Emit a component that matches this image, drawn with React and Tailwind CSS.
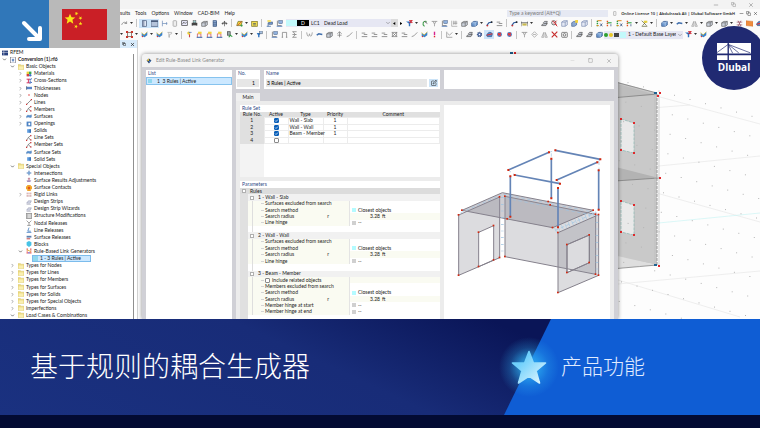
import React from "react";
import { FiChevronDown, FiChevronRight, FiMinus, FiSquare, FiX, FiCopy, FiEdit } from "react-icons/fi";

// small line icons on a 10x10 grid, shared by the toolbars and the tree
const GLYPHS = {
  redo: <path d="M1 7C2 3 6 2 8 5M8 5V2M8 5H5" stroke="#777" fill="none" />,
  panel: <><rect x="2" y="1" width="6" height="8" fill="#dfe8f5" stroke="#47597a" /><path d="M4 1v8" stroke="#47597a" /></>,
  window: <><rect x="0" y="1" width="10" height="8" fill="#b4c3da" stroke="#47597a" /><path d="M0 2h10" stroke="#47597a" strokeWidth="1.6" /></>,
  axis: <path d="M2 1v8M2 5h7M8 3v4" stroke="#6b8bb8" fill="none" />,
  page: <rect x="3" y="1" width="5" height="8" rx="1" fill="#eee" stroke="#999" />,
  board: <><rect x="1" y="1" width="8" height="7" fill="#eef" stroke="#444" /><path d="M2 6l2-3 2 2 2-2" stroke="#444" fill="none" /></>,
  printer: <><rect x="1" y="4" width="8" height="4" fill="#444" /><rect x="3" y="1" width="4" height="3" fill="#9cc" stroke="#444" strokeWidth=".6" /><path d="M3 8h4" stroke="#ddd" /></>,
  cube: <><path d="M1 4l3-2h5v5L6 9H1z" fill="#ccd2dc" stroke="#666" /><path d="M1 4h5v5M6 4l3-2" stroke="#666" fill="none" /></>,
  cubeBlue: <><path d="M1 4l3-2h5v5L6 9H1z" fill="#6f9bd1" stroke="#2c5288" /><path d="M1 4h5v5M6 4l3-2" stroke="#dfeaf8" strokeWidth=".7" fill="none" /></>,
  cubeYellow: <><path d="M1 4l3-2h4v5L5 9H1z" fill="#8ba8d0" stroke="#4a6692" /><rect x="6" y="0" width="4" height="4" fill="#f4d23c" /></>,
  cabinet: <><rect x="3" y="1" width="5" height="8" fill="#8aa7cf" stroke="#35507a" /><path d="M3 4h5M3 7h5" stroke="#35507a" /></>,
  move: <><path d="M5 2v7M1 5h8" stroke="#555" /><path d="M5 1l2 3H3zM1 5l2-2v4zM9 5L7 3v4z" fill="#555" /></>,
  script: <><path d="M3 2h6L7 8H1z" fill="#f5d53b" stroke="#6d6a20" /><path d="M2 8l6-6" stroke="#c33" /><circle cx="8" cy="8" r="1.5" fill="#3a9b46" /></>,
  note: <><rect x="1" y="2" width="8" height="7" fill="#f2dd50" stroke="#7e7320" /><path d="M3 5h4M3 7h4" stroke="#456" /></>,
  loadcase: <><path d="M1 9h6M3 9V4" stroke="#2e5c9c" /><rect x="4" y="3" width="5" height="3" fill="#7ba3d8" stroke="#35507a" /><rect x="2" y="0" width="5" height="3" fill="#f4df6e" /></>,
  supportBlue: <><path d="M2 1v7h6" stroke="#666" fill="none" /><rect x="4" y="1" width="5" height="4" fill="#8fb1de" stroke="#35507a" strokeWidth=".7" /><path d="M1 9h8" stroke="#2e62b0" /></>,
  filterRed: <><path d="M0 2h9L6 5v4H4V5z" fill="#2f74c0" /><path d="M5 0l4 4M9 0L5 4" stroke="#d81f26" strokeWidth="1.7" /></>,
  filter: <><path d="M1 3h6L5 6v3H3V6z" fill="#2f74c0" /><rect x="5" y="0" width="4" height="4" fill="#aac2e2" stroke="#456" strokeWidth=".7" /></>,
  filterGray: <path d="M2 2h6v2L5 5v4H4V2" stroke="#aaa" fill="none" />,
  rotate: <><path d="M8 2C3 1 1 6 5 9" stroke="#3a9b46" strokeWidth="1.5" fill="none" /><path d="M5 2l4 3" stroke="#555" strokeWidth="1.3" /></>,
  load: <path d="M1 2h8M3 2l2 4 2-4M5 6v3" stroke="#888" fill="none" />,
  table: <path d="M1 1v8h8M3 3h6M3 5h6M4 1v6M7 1v6" stroke="#888" strokeWidth=".8" fill="none" />,
  chart: <path d="M1 1v8h8M2 3l3 3 4-4" stroke="#888" fill="none" />,
  member: <><path d="M1 8l3-4 5-1" stroke="#2e5c9c" strokeWidth="1.6" fill="none" /><circle cx="2" cy="8" r="1.3" fill="#c33" /><circle cx="8" cy="3" r="1.3" fill="#222" /></>,
  dims: <><path d="M0 2v7M10 2v7M0 4h10" stroke="#333" /><rect x="2" y="5" width="6" height="3" fill="#c9b94f" /></>,
  zoomRed: <><circle cx="4" cy="4" r="3" stroke="#333" fill="none" /><path d="M6 6l3 3M2 1l6 6M8 1L4 5" stroke="#d81f26" strokeWidth="1.3" /></>,
  wire: <path d="M1 3l3-2h5v6L6 9H1zM1 3h5v6M6 3l3-2" stroke="#7f8fb5" fill="#e3e8f4" />,
  viewX: <><path d="M2 1v8" stroke="#259b3e" strokeWidth="2" strokeDasharray="2 1" /><path d="M2 1h6M1 8h3" stroke="#e08a20" strokeWidth="1.4" /><path d="M6 5l3 4M9 5L6 9" stroke="#247" /></>,
  viewY: <><path d="M2 1v8" stroke="#e5531d" strokeWidth="2" strokeDasharray="2 1" /><path d="M2 4h6" stroke="#259b3e" strokeWidth="1.5" /><path d="M7 6v3" stroke="#247" /></>,
  star: <><path d="M1 1l7 7M8 2L2 8M1 9h8" stroke="#5e6238" /><rect x="4" y="1" width="5" height="3" fill="#e5cf3c" /></>,
  beam: <path d="M1 6l3-2 5 1" stroke="#3f6eac" strokeWidth="2" fill="none" />,
  spider: <path d="M1 3h8M1 7h8M3 1l4 8M7 1L3 9" stroke="#9a5264" />,
  orange: <path d="M0 1l10 1v7L0 8z" fill="#ef8d3e" stroke="#c9682a" strokeWidth=".6" />,
  red: <><rect x="2" y="2" width="6" height="6" fill="none" stroke="#654" /><path d="M0 0h3v3H0zM7 0h3v3H7zM0 7h3v3H0zM7 7h3v3H7z" fill="#c8362c" /></>,
  map: <><path d="M1 3l4 2 4-4v5L5 9 1 7z" fill="#3c83cc" /><path d="M1 2l3 4 5-5" stroke="#e1c23b" fill="none" /><circle cx="2" cy="8" r="1" fill="#d22" /></>,
  app: <><path d="M1 4l4-3 4 3-4 5z" fill="#2d4468" /><path d="M1 4l4-3v4z" fill="#e8c53a" /><path d="M5 5l4-1-3 4z" fill="#4d86d0" /></>,
  nodeYellow: <><path d="M2 9V4h5v5" stroke="#c44" fill="none" /><path d="M3 1h5v3H3z" fill="#f3d43c" /><path d="M1 9h8" stroke="#3a6ab0" strokeWidth="1.5" /></>,
  arrowYellow: <><path d="M5 3v6" stroke="#c44" strokeWidth="1.6" /><circle cx="4" cy="3" r="2.2" fill="#eed03b" /><path d="M4 2h4" stroke="#36c" /></>,
  green: <><rect x="2" y="1" width="4" height="5" fill="#9aa" stroke="#444" /><path d="M4 9l2-3 3 2" stroke="#2a9a3c" strokeWidth="1.5" fill="none" /></>,
  frame: <path d="M2 9V2h6v7M1 9h2M7 9h2" stroke="#777" fill="none" />,
  sigma: <path d="M2 1h6M2 9h6M2 5h6M3 1l3 4-3 4" stroke="#777" fill="none" />,
  wave: <path d="M1 2c1 7 3 7 4 2 1 5 3 5 4-2" stroke="#888" fill="none" />,
  up: <path d="M5 9V1M2 4l3-3 3 3M2 6h6" stroke="#777" fill="none" />,
  slash: <path d="M1 8l3-1 5-5" stroke="#777" fill="none" />,
  steps: <path d="M1 3h5M4 5h5M1 8h8" stroke="#6b6b6b" fill="none" />,
  grid: <path d="M1 2h8M1 8h8M2 2v6M8 2v6M2 8l6-6M3 3l4 4" stroke="#777" fill="none" />,
  magenta: <><path d="M5 1v5" stroke="#d6218d" strokeWidth="2" /><path d="M5 7v2" stroke="#e0282b" strokeWidth="2" /></>,
  gear: <><circle cx="5" cy="5" r="3" fill="#5d78b5" stroke="#35507a" strokeDasharray="1.5 1" strokeWidth="1.6" /><circle cx="5" cy="5" r="1" fill="#fff" /></>,
  eye: <><path d="M1 6c2-5 6-5 8-2L8 8H2z" fill="#5688c8" stroke="#2c5288" /><path d="M1 6l8-2" stroke="#d33" strokeWidth="1.5" /></>,
  ball: <><circle cx="5" cy="5" r="3.5" fill="#4a7fc6" /><path d="M3 6l4-3M3 3l4 4" stroke="#e33" strokeWidth="1.8" /></>,
  polar: <path d="M5 1l4 4-4 4-4-4zM3 5h4" stroke="#999" fill="none" />,
  mirror: <path d="M1 9l3-7v7zM9 9L6 2v7z" stroke="#999" fill="none" />,
  cross: <path d="M1 1l8 8M9 1L1 9" stroke="#c62828" strokeWidth="1.6" />,
  camera: <><rect x="1" y="2" width="8" height="7" rx="1" fill="none" stroke="#555" /><circle cx="5" cy="5.500" r="1.800" fill="none" stroke="#555" /></>,
  stack: <path d="M1 7l3-2h5L7 8H1zM3 4l2-2h4L8 5" stroke="#555" fill="#b9bec8" />,
  folder: <><path d="M0 1h4l1 1h5v7H0z" fill="#eedb80" stroke="#cdb860" strokeWidth=".6" /><path d="M1 4h8v5H1z" fill="#f9efb2" /></>,
  rfem: <><rect x="0" y="1" width="10" height="8" fill="#28407e" /><path d="M3 1v8M0 4h10" stroke="#fff" strokeWidth=".8" /></>,
  file: <><rect x="1" y="0" width="8" height="10" fill="#fff" stroke="#667" /><path d="M3 4h4M3 6h4M5 3v5" stroke="#2e62b0" /></>,
  materials: <><rect x="1" y="1" width="4" height="4" fill="#e9d23a" /><rect x="5" y="1" width="4" height="4" fill="#35a853" /><rect x="1" y="5" width="4" height="4" fill="#d33f3f" /><circle cx="7" cy="7" r="2" fill="#3f74c6" /></>,
  section: <><path d="M1 2h6M1 8h6M4 2v6" stroke="#d0305d" strokeWidth="1.6" /><path d="M6 3l4-2M6 9l4-2M7 4v4" stroke="#3f6ec0" strokeWidth="1.6" /></>,
  thickness: <><rect x="1" y="3" width="9" height="4" fill="#5a86c8" /><path d="M1 2v6" stroke="#234" /></>,
  dot: <circle cx="5" cy="5" r="1.300" fill="#d33" />,
  line: <><path d="M1 9l8-8" stroke="#444" /><path d="M0 8h2v2H0zM8 0h2v2H8z" fill="#c33" /></>,
  lineSet: <><path d="M1 9l3-5 4-3M4 4l4 5" stroke="#555" fill="none" /><path d="M0 8h2v2H0zM7 0h2v2H7zM7 7h2v2H7z" fill="#c33" /></>,
  surface: <path d="M1 5c2-3 5 1 8-2v4c-3 2-5-2-8 1z" fill="#5a93d2" stroke="#3c6ca8" strokeWidth=".6" />,
  opening: <><rect x="1" y="1" width="8" height="8" fill="#4d83c4" /><rect x="4" y="3" width="3" height="4" fill="#fff" /></>,
  solid: <><path d="M2 2h6v6H2z" fill="#5c9ade" /><path d="M6 2h2v6H6z" fill="#2f66ab" /></>,
  inter: <path d="M5 1l1 3 3 1-3 1-1 3-1-3-3-1 3-1z" fill="#6da1dc" stroke="#3f6ea8" strokeWidth=".6" />,
  adjust: <><path d="M1 6h8L7 8H2z" fill="#8c6dab" /><path d="M5 1v5M3 3h4" stroke="#a04060" /></>,
  contact: <><path d="M2 0h6v2h2v5H8v3H2V7H0V2h2z" fill="#f2a52a" /><circle cx="5" cy="5" r="2" fill="#e0541c" /></>,
  rigid: <path d="M2 1v8M5 1v8M8 1v8" stroke="#a55" strokeDasharray="3 1" />,
  strip: <path d="M1 7l3-4h5L7 7zM1 9h7" fill="#d5d9e8" stroke="#7a7f99" strokeWidth=".7" />,
  modify: <><rect x="0" y="1" width="10" height="8" fill="#bbb" stroke="#777" /><path d="M3 3h5M3 5h5M3 7h5" stroke="#fff" /></>,
  release: <path d="M1 1l4 4 4-4M5 5v4M2 9h6" stroke="#666" fill="none" />,
  lineRelease: <path d="M5 1L3 7h5M1 9h8" stroke="#3f7cc0" strokeWidth="1.3" fill="none" />,
  surfRelease: <><path d="M1 3h8v3H1z" fill="#5c7fae" /><path d="M1 8h6" stroke="#b33" strokeWidth="1.5" /></>,
  block: <path d="M5 0l4 2v5L5 10 1 7V2z" fill="#49c3e6" />,
  generator: <><path d="M2 1v8M8 1v8" stroke="#d33" strokeWidth="2" strokeDasharray="2 1" /><path d="M2 3l6 3" stroke="#e0b42c" strokeWidth="1.5" /><circle cx="5" cy="8" r="1.5" fill="#7b57c0" /></>,
  cyan: <rect x="0" y="0" width="10" height="10" fill="#8fd8ee" />,
};

const Glyph = ({ name, className = "size-2" }) => (
  <svg viewBox="0 0 10 10" className={`${className} shrink-0`} aria-hidden="true">
    {GLYPHS[name]}
  </svg>
);

const Toolbar = ({ items, label }) => (
  <div role="toolbar" aria-label={label} className="flex shrink-0 items-center">
    {items.split(" ").map((item, i) => {
      if (item === "|") return <span key={i} className="ml-0.5 mr-0.5 h-2 w-px shrink-0 bg-[#c4c4c4]" />;
      if (item === "_") return <span key={i} className="w-[5px] shrink-0" />;
      if (item === "v")
        return (
          <button key={i} aria-label="More" className="flex h-2 w-[5px] shrink-0 items-center justify-center">
            <svg viewBox="0 0 4 3" className="w-[3px]"><path d="M0 0h4L2 2.500z" fill="#333" /></svg>
          </button>
        );
      const active = item.startsWith("*");
      const name = active ? item.slice(1) : item;
      return (
        <button
          key={i}
          aria-label={name}
          className={`flex h-[9px] w-[10px] shrink-0 items-center justify-center ${active ? "bg-[#cce4f9]" : ""}`}
        >
          <Glyph name={name} className="size-[7px]" />
        </button>
      );
    })}
  </div>
);

// [level, state (o = open, c = closed, - = leaf), icon, label]
const TREE = [
  [0, "-", "rfem", "RFEM"],
  [1, "o", "file", "Conversion (1).rf6"],
  [2, "o", "folder", "Basic Objects"],
  [3, "c", "materials", "Materials"],
  [3, "c", "section", "Cross-Sections"],
  [3, "c", "thickness", "Thicknesses"],
  [3, "c", "dot", "Nodes"],
  [3, "c", "line", "Lines"],
  [3, "c", "lineSet", "Members"],
  [3, "c", "surface", "Surfaces"],
  [3, "c", "opening", "Openings"],
  [3, "-", "solid", "Solids"],
  [3, "-", "lineSet", "Line Sets"],
  [3, "-", "lineSet", "Member Sets"],
  [3, "-", "surface", "Surface Sets"],
  [3, "-", "solid", "Solid Sets"],
  [2, "o", "folder", "Special Objects"],
  [3, "-", "inter", "Intersections"],
  [3, "-", "adjust", "Surface Results Adjustments"],
  [3, "-", "contact", "Surface Contacts"],
  [3, "c", "rigid", "Rigid Links"],
  [3, "-", "strip", "Design Strips"],
  [3, "-", "strip", "Design Strip Wizards"],
  [3, "-", "modify", "Structure Modifications"],
  [3, "-", "release", "Nodal Releases"],
  [3, "-", "lineRelease", "Line Releases"],
  [3, "-", "surfRelease", "Surface Releases"],
  [3, "-", "block", "Blocks"],
  [3, "o", "generator", "Rule-Based Link Generators"],
  [4, "-", "cyan", "1 - 3 Rules | Active"],
  [2, "c", "folder", "Types for Nodes"],
  [2, "c", "folder", "Types for Lines"],
  [2, "c", "folder", "Types for Members"],
  [2, "c", "folder", "Types for Surfaces"],
  [2, "c", "folder", "Types for Solids"],
  [2, "c", "folder", "Types for Special Objects"],
  [2, "c", "folder", "Imperfections"],
  [2, "o", "folder", "Load Cases & Combinations"],
];

const INDENT = ["pl-0.5", "pl-0.5", "pl-[10px]", "pl-[18px]", "pl-[26px]"];

const Navigator = () => (
  <aside className="flex w-[138px] shrink-0 flex-col border-r border-[#d0d0d0] bg-white">
    <div className="flex h-2 shrink-0 items-center justify-end gap-1 bg-[#d8ebfb] pr-0.5">
      <button aria-label="Float panel"><FiCopy className="size-1" strokeWidth={3} /></button>
      <button aria-label="Close panel"><FiX className="size-[5px]" strokeWidth={3} /></button>
    </div>
    <div className="flex min-h-0 flex-1">
      <ul className="grid min-w-0 flex-1 auto-rows-fr whitespace-nowrap pt-px">
        {TREE.map(([level, state, icon, label], i) => (
          <li key={i} className={`flex min-h-0 items-center ${INDENT[level]}`}>
            {level > 0 && (
              <span className="flex w-2 shrink-0 text-[#333]">
                {state === "o" && <FiChevronDown className="size-[5px]" strokeWidth={3} />}
                {state === "c" && <FiChevronRight className="size-[5px]" />}
              </span>
            )}
            <span
              className={
                level === 4
                  ? "-ml-0.5 flex h-[7px] w-[59px] items-center gap-0.5 border border-[#7cbcec] bg-[#cce8ff] leading-none"
                  : `flex items-center gap-0.5 ${level === 1 ? "font-bold" : ""}`
              }
            >
              <Glyph name={icon} className={level === 4 ? "size-[5px]" : "size-1.5"} />
              {label}
            </span>
          </li>
        ))}
      </ul>
      <div className="mt-1.5 w-1 shrink-0"><div className="h-full w-px bg-[#8f8f8f]" /></div>
    </div>
  </aside>
);

const RULES = [
  { no: 1, type: "Wall - Slab", priority: 1, active: true },
  { no: 2, type: "Wall - Wall", priority: 1, active: true },
  { no: 3, type: "Beam - Member", priority: 1, active: true },
  { no: 4, type: "", priority: "", active: false },
];

const Check = ({ checked, label }) => (
  <label className="inline-grid size-[5px] shrink-0 place-items-center">
    <input
      type="checkbox"
      aria-label={label}
      defaultChecked={checked}
      className="col-start-1 row-start-1 size-[5px] appearance-none rounded-[1px] border border-[#8a8a8a] bg-white checked:border-[#0a5fb8] checked:bg-[#0a5fb8]"
    />
    {checked && (
      <svg viewBox="0 0 5 5" className="pointer-events-none col-start-1 row-start-1 size-[5px]">
        <path d="M1 2.500l1 1 2-2" stroke="#fff" strokeWidth=".7" fill="none" />
      </svg>
    )}
  </label>
);

const RuleSet = () => (
  <section className="flex h-[72px] shrink-0 flex-col bg-[linear-gradient(to_right,#f3f3f3_24px,white_24px)]">
    <h2 className="h-[7px] bg-white pl-0.5 leading-[7px] text-[#2f4a86]">Rule Set</h2>
    <table className="h-8 w-full table-fixed border-collapse text-center leading-none">
      <thead className="bg-[#e0e0e0]">
        <tr>
          <th scope="col" className="w-6 p-0 font-normal">Rule No.</th>
          <th scope="col" className="w-6 p-0 font-normal">Active</th>
          <th scope="col" className="w-[35px] p-0 font-normal">Type</th>
          <th scope="col" className="w-6 p-0 font-normal">Priority</th>
          <th scope="col" className="p-0 font-normal">Comment</th>
        </tr>
      </thead>
      <tbody>
        {RULES.map((rule) => (
          <tr key={rule.no}>
            <td className="bg-[#e0e0e0] p-0">{rule.no}</td>
            <td className="border border-[#ececec] p-0 leading-[0]"><Check checked={rule.active} label={`Rule ${rule.no} active`} /></td>
            <td className="whitespace-nowrap border border-[#ececec] p-0 pl-px text-left">{rule.type}</td>
            <td className="border border-[#ececec] p-0">{rule.priority}</td>
            <td className="border border-[#ececec] p-0" />
          </tr>
        ))}
      </tbody>
    </table>
  </section>
);

const searchRows = (first) => [
  { label: first },
  { label: "Search method", color: "bg-[#b4fbff]", value: "Closest objects" },
  { label: "Search radius", symbol: "r", number: "3.28" },
];

const PARAMS = [
  { group: "1 - Wall - Slab" },
  ...searchRows("Surfaces excluded from search"),
  { label: "Line hinge", color: "bg-[#d0d0d0]", value: "--" },
  { blank: true },
  { group: "2 - Wall - Wall" },
  ...searchRows("Surfaces excluded from search"),
  { label: "Line hinge", color: "bg-[#d0d0d0]", value: "--" },
  { blank: true },
  { group: "3 - Beam - Member" },
  { label: "Include related objects", check: true },
  ...searchRows("Members excluded from search"),
  { label: "Member hinge at start", color: "bg-[#d0d0d0]", value: "--" },
  { label: "Member hinge at end", color: "bg-[#d0d0d0]", value: "--" },
];

const Collapse = () => (
  <button aria-label="Collapse" className="flex size-1 shrink-0 items-center justify-center border border-[#b0b0b0] bg-white" />
);

const ParamRow = ({ row }) => {
  if (row.blank) return <div className="ml-2 bg-white pl-1"><div className="h-full w-px bg-[#dedede]" /></div>;
  if (row.group)
    return (
      <div className="ml-2 flex items-center gap-1 bg-[#f1f1f1] pl-0.5">
        <Collapse />
        {row.group}
      </div>
    );
  return (
    <div className="ml-2 flex bg-white">
      <div className="flex w-[102px] shrink-0 items-center border-r border-[#e4e4e4] bg-[#fafbf2] pl-1">
        <span className="h-full w-px bg-[#dedede]" />
        <span className="ml-2 mr-px h-px w-[3px] bg-[#d4d4d4]" />
        {row.check ? (
          <label className="flex items-center gap-0.5">
            <Check label={row.label} />
            {row.label}
          </label>
        ) : (
          row.label
        )}
        {row.symbol && <span className="ml-auto mr-5">{row.symbol}</span>}
      </div>
      <div className={`flex flex-1 items-center gap-0.5 pl-0.5 ${row.number || row.check ? "bg-[#fafbf2]" : ""}`}>
        {row.color && <span className={`size-1 ${row.color}`} />}
        {row.value}
        {row.number && <span className="w-7 text-right">{row.number}</span>}
        {row.number && "ft"}
      </div>
    </div>
  );
};

const Parameters = () => (
  <section className="flex min-h-0 flex-1 flex-col bg-[linear-gradient(to_right,#e0e0e0_8px,white_8px)]">
    <h2 className="h-[7px] shrink-0 bg-white pl-0.5 leading-[7px] text-[#2f4a86]">Parameters</h2>
    <div className="grid min-h-0 flex-1 auto-rows-fr whitespace-nowrap pb-1 leading-none">
      <div className="flex items-center gap-1 bg-[#dcdcdc] pl-0.5">
        <Collapse />
        Rules
      </div>
      {PARAMS.map((row, i) => (
        <ParamRow key={i} row={row} />
      ))}
    </div>
  </section>
);

const BEAMS = [
  [205, 240, 327, 187], [346, 181, 481, 208], [224, 255, 360, 281], [350, 270, 472, 217],
  [334, 206, 334, 325], [476, 241, 476, 359], [211, 259, 211, 380], [354, 294, 354, 412],
];
const MODEL_NODES = [
  [66, 361], [56, 375], [179, 321], [195, 319], [179, 503], [56, 556], [116, 427], [161, 407], [161, 510], [116, 530],
  [195, 500], [467, 373], [467, 553], [476, 374], [476, 556], [354, 428], [354, 608], [381, 464], [448, 435], [448, 518],
  [381, 548], [460, 361], [338, 413], [202, 387], [325, 335], [331, 345],
];

const ModelPreview = () => (
  <svg viewBox="12 45 498 642" preserveAspectRatio="xMidYMin meet" className="h-[214px] w-full" role="img" aria-label="Model preview">
    <g fill="#8c8a96" fillOpacity=".3" stroke="#85818c" strokeWidth="3" fillRule="evenodd">
      <path d="M195 319L467 373V553L195 500z" />
      <path d="M56 375L179 321V503L56 556zM116 427V530L161 510V407z" />
      <path d="M66 361L187 308L460 361L338 413z" fillOpacity=".42" />
      <path d="M354 428L476 374V556L354 608zM381 464V548L448 518V435z" />
      <path d="M381 464L448 435V518L381 548z" fillOpacity="0" />
    </g>
    <g stroke="#9cc3e2" strokeWidth="2" fill="none" strokeDasharray="10 8">
      <path d="M62 368L183 315M191 313L463 367M346 421L470 367" />
      <path d="M200 325L455 375" />
      <path d="M327 187L346 181M334 190V206M481 208L472 217M477 215V241M205 240L224 255M350 270L360 281" />
    </g>
    <path d="M187 322V500M471 376V552" stroke="#9cc3e2" strokeWidth="8" strokeDasharray="2 18" />
    <path d="M346 421L468 368" stroke="#a8cbe6" strokeWidth="14" strokeDasharray="2 9" />
    {BEAMS.map(([x1, y1, x2, y2], i) => (
      <g key={i}>
        <path d={`M${x1} ${y1}L${x2} ${y2}`} stroke="#6484b6" strokeWidth="5" />
        <path d={`M${x1 - 3} ${y1 - 3}h6v6h-6zM${x2 - 3} ${y2 - 3}h6v6h-6z`} fill="#d3280f" />
      </g>
    ))}
    {MODEL_NODES.map(([x, y], i) => (
      <rect key={i} x={x - 3} y={y - 3} width="5" height="5" fill="#d3280f" />
    ))}
  </svg>
);

const GeneratorDialog = () => (
  <div
    role="dialog"
    aria-label="Edit Rule-Based Link Generator"
    className="relative ml-1 mr-[142px] mt-3.5 flex min-w-0 flex-1 flex-col overflow-hidden rounded-t-[3px] bg-[#d0d0d6] shadow-[0_0_4px_rgba(0,0,0,0.45)]"
  >
    <div className="flex h-[13px] shrink-0 items-center gap-1 bg-[#f3f3f3] pl-1 text-[#8a8a8a]">
      <Glyph name="app" className="size-1.5" />
      Edit Rule-Based Link Generator
      <div className="ml-auto mr-1.5 flex items-center gap-[13px]">
        <button aria-label="Minimize"><FiMinus className="size-[5px] text-[#c8c8c8]" /></button>
        <button aria-label="Maximize"><FiSquare className="size-[5px]" /></button>
        <button aria-label="Close"><FiX className="size-[6px]" /></button>
      </div>
    </div>

    <div className="flex min-h-0 flex-1 gap-1 px-1 pt-[3px]">
      <section className="w-[86px] shrink-0 bg-white">
        <h2 className="h-[7px] pl-0.5 leading-[7px] text-[#2f4a86]">List</h2>
        <button className="flex h-2 w-full items-center gap-[5px] border border-[#86c3ee] bg-[#cce8ff] pl-px">
          <Glyph name="cyan" className="size-1" />
          <span>1&nbsp; 3 Rules | Active</span>
        </button>
      </section>

      <div className="flex min-w-0 flex-1 flex-col">
        <div className="flex h-[19px] shrink-0 gap-1">
          <label className="w-6 shrink-0 bg-white px-px text-[#2f4a86]">
            <span className="block h-[7px] pl-px leading-[7px]">No.</span>
            <input readOnly value="1" className="mt-0.5 block h-2 w-full bg-[#e6e6e6] pr-1 text-right text-black" />
          </label>
          <div className="flex w-[176px] shrink-0 items-end gap-0.5 bg-white px-0.5 pb-0.5">
            <label className="block h-full flex-1 text-[#2f4a86]">
              <span className="block h-[7px] leading-[7px]">Name</span>
              <input defaultValue="3 Rules | Active" className="mt-0.5 block h-2 w-full bg-[#e6e6e6] pl-px text-black" />
            </label>
            <button aria-label="Edit name" className="flex h-2 w-[9px] items-center justify-center bg-[#cbe3f7]">
              <FiEdit className="size-1.5" />
            </button>
          </div>
          <div className="flex-1 bg-white" />
        </div>

        <div role="tablist" className="mt-1 flex h-2 shrink-0">
          <button role="tab" aria-selected="true" className="w-6 bg-[#f0f0f0]">Main</button>
        </div>

        <div className="flex min-h-0 flex-1 gap-1 bg-[#ececec] pl-1 pr-1 pt-1">
          <div className="flex w-[200px] shrink-0 flex-col gap-1">
            <RuleSet />
            <Parameters />
          </div>
          <div className="min-w-0 flex-1 bg-white">
            <ModelPreview />
          </div>
        </div>
      </div>
    </div>
  </div>
);

// faint guide points of the work plane, sheared like the view
const GRID_POINTS = Array.from({ length: 15 }, (_, r) =>
  Array.from({ length: 13 }, (_, c) => [612 + c * 15.5 - r * 2.2, 68 + c * 4.2 + r * 19.5])
).flat();

const SCENE_NODES = [
  [620, 118], [633, 122], [633, 152], [620, 149], [620, 200], [633, 204], [633, 234], [620, 231],
  [659, 177], [659, 92], [657, 95], [658, 265], [514, 52],
];

const Scene = () => (
  <svg viewBox="138 40 622 279" preserveAspectRatio="xMaxYMin slice" className="absolute inset-0 size-full" aria-hidden="true">
    <g stroke="#e4e4e4" strokeWidth=".6">
      <path d="M660 97L760 124M600 112L690 105M618 170L760 156M610 180L760 222M618 284L760 271M618 280L740 317" />
      <path d="M618 227L760 213" stroke="#c4f3f3" />
    </g>
    {/* tower behind the dialog */}
    <path d="M600 77L657 93V265L600 254z" fill="#c9c9c9" />
    <path d="M600 98L657 95L600 79z" fill="#bdbdbd" />
    <path d="M600 163L659 178L600 182z" fill="#b3b3b3" />
    <path d="M600 252L657 265L600 270z" fill="#dedede" />
    <path d="M600 78L657 93M600 99L657 94M600 182L659 178M600 270L657 265" stroke="#777" strokeWidth=".7" fill="none" />
    <path d="M655 94V265M659 94V265" stroke="#bbb" strokeWidth=".7" />
    <path d="M657 94V265" stroke="#999" strokeDasharray="3 1" />
    <g fill="#e9e9e9" stroke="#7ab0aa" strokeWidth=".6" strokeDasharray="3 1">
      <path d="M621 119L634 123V153L621 150z" />
      <path d="M621 201L634 205V235L621 232z" />
    </g>
    {GRID_POINTS.map(([x, y], i) => (
      <rect key={i} x={x} y={y + 10} width="1" height="1" fill="#b5b5b5" />
    ))}
    {SCENE_NODES.map(([x, y], i) => (
      <rect key={i} x={x} y={y} width="2" height="2" fill="#e0282b" />
    ))}
    <path d="M654 92h3v2h-3zM654 264h3v2h-3zM510 52h3v2h-3z" fill="#1f6291" />
  </svg>
);

const Banner = () => (
  <footer className="shrink-0 bg-[#030b33] pb-[13px]">
    <div className="relative flex h-24 items-center bg-[linear-gradient(25deg,#1a3180_0%,#182c78_45%,#0a1557_72%)]">
      <div className="absolute inset-y-0 right-0 w-64 bg-[#0f5dd4] [clip-path:polygon(47px_0,100%_0,100%_100%,0_100%)]" />
      <h1 className="min-w-0 flex-1 whitespace-nowrap pb-1 pl-[30px] font-['Noto_Sans_CJK_SC',sans-serif] text-[28px] font-light leading-none text-white">
        基于规则的耦合生成器
      </h1>
      <div className="relative flex w-64 shrink-0 items-center gap-3 pl-[5px]">
        <svg viewBox="0 0 40 40" className="size-10 shrink-0 overflow-visible" aria-hidden="true">
          <defs>
            <radialGradient id="glow">
              <stop offset="0.300" stopColor="#2fb4f5" stopOpacity=".7" />
              <stop offset="0.650" stopColor="#2fb4f5" stopOpacity=".25" />
              <stop offset="1" stopColor="#2fb4f5" stopOpacity="0" />
            </radialGradient>
            <linearGradient id="star" x1="0" y1="0" x2="1" y2="1">
              <stop offset="0.300" stopColor="#6fd0fb" />
              <stop offset="1" stopColor="#e6f8ff" />
            </linearGradient>
          </defs>
          <circle cx="20" cy="20" r="30" fill="url(#glow)" />
          <path
            d="M20 4.500L24.400 16H36.500L27 23.800L30.500 36L20 29L9.500 36L13 23.800L3.500 16H15.600z"
            fill="url(#star)" stroke="url(#star)" strokeWidth="1.600" strokeLinejoin="round"
          />
        </svg>
        <p className="whitespace-nowrap pb-1 font-['Noto_Sans_CJK_SC',sans-serif] text-[21px] font-light leading-none text-[#e1ecff]">产品功能</p>
      </div>
    </div>
  </footer>
);

const FLAG_STAR = "M0-10L2.900-3.100 10-3 4.600 1.500 6.200 9 0 4.800-6.200 9-4.600 1.500-10-3-2.900-3.100z";

const Badges = () => (
  <>
    <div className="absolute left-0 top-0 flex h-12">
      <div className="flex w-[49px] items-end justify-end bg-[#3077b9] pb-1.5 pr-1.5">
        <svg viewBox="0 0 22 22" className="size-[22px]" aria-hidden="true">
          <path d="M3 3L18 18M8 19H19V8" fill="none" stroke="#fff" strokeWidth="4" strokeLinecap="round" strokeLinejoin="round" />
        </svg>
      </div>
      <div className="flex w-[71px] items-center justify-center bg-[#b9b9b9]">
        <svg viewBox="0 0 45 31" className="h-[31px] w-[45px]" role="img" aria-label="China">
          <path d="M0 0h45v31H0z" fill="#ca1f26" />
          <g fill="#fbe316">
            <path d={FLAG_STAR} transform="translate(8 10) scale(.53)" />
            <path d={FLAG_STAR} transform="translate(14.500 4.500) rotate(20) scale(.19)" />
            <path d={FLAG_STAR} transform="translate(18.500 9) rotate(40) scale(.19)" />
            <path d={FLAG_STAR} transform="translate(18.500 14.500) scale(.19)" />
            <path d={FLAG_STAR} transform="translate(14 17.500) rotate(20) scale(.19)" />
          </g>
        </svg>
      </div>
    </div>
    <div className="absolute -right-1.5 top-[26px] flex size-16 flex-col items-center justify-center rounded-full bg-[#202a72] text-white">
      <svg viewBox="0 0 100 50" className="mt-px h-[17px] w-[34px]" aria-hidden="true">
        <path d="M0 0h100v31H0zM0 36h100v14H0z" fill="#fff" />
        <path d="M33 0v50" stroke="#202a72" strokeWidth="4" />
        <path d="M0 28L33 4L64 29M33 4L98 29M33 4L46 30" stroke="#202a72" strokeWidth="2" fill="none" />
      </svg>
      <span className="font-['Open_Sans',sans-serif] text-[10px] font-bold leading-[14px]">Dlubal</span>
    </div>
  </>
);

const AppBars = () => (
  <header className="shrink-0 bg-[#f3f3f3]">
    <div className="flex h-[9px] items-center justify-end gap-3 pr-1.5 text-[#777]">
      <button aria-label="Minimize window"><FiMinus className="size-1.5" /></button>
      <button aria-label="Restore window"><FiCopy className="size-[5px]" /></button>
      <button aria-label="Close window"><FiX className="size-1.5" /></button>
    </div>
    <div className="flex h-2 items-center whitespace-nowrap bg-[#fafafa] pl-[120px]">
      <nav className="flex gap-[5px]">
        {["sults", "Tools", "Options", "Window", "CAD-BIM", "Help"].map((item) => (
          <button key={item}>{item}</button>
        ))}
      </nav>
      <input
        type="search"
        aria-label="Search"
        placeholder="Type a keyword (Alt+Q)"
        className="ml-auto h-[7px] w-[101px] bg-[#e6e9f3] pl-0.5 placeholder:text-[#777]"
      />
      <Glyph name="page" className="mx-1 size-[5px]" />
      <span className="font-['Open_Sans',sans-serif] text-[4px] font-semibold text-[#111]">Online License 10 | Abdulrzzak Ali | Dlubal Software GmbH</span>
      <div className="flex items-center gap-0.5 pl-1 pr-0.5">
        <FiMinus className="size-[5px]" /><FiCopy className="size-[5px]" /><FiX className="size-[5px]" />
      </div>
    </div>
    <div className="flex h-3 items-center overflow-hidden bg-[#fafafa] pl-[119px]">
      <Toolbar label="Standard" items="redo v | *panel *window axis page board printer cube cabinet move | script v note | loadcase supportBlue" />
      <div className="ml-0.5 flex h-2 w-[105px] shrink-0 items-center bg-[#e6e7f3]">
        <span className="h-1.5 w-[11px] bg-[#c3f9fb]" />
        <span className="h-1.5 w-3 bg-black text-center leading-[6px] text-white">D</span>
        <span className="w-[15px] pl-0.5">LC1</span>
        <select aria-label="Load case" className="h-2 flex-1 appearance-none bg-transparent p-0"><option>Dead Load</option></select>
        <FiChevronDown className="size-1.5 text-[#666]" />
      </div>
      <button aria-label="Previous" className="flex h-2 w-[7px] shrink-0 items-center justify-center bg-[#dcdcdc]">
        <svg viewBox="0 0 3 4" className="h-[3px]"><path d="M3 0v4L0 2z" /></svg>
      </button>
      <button aria-label="Next" className="flex h-2 w-1.5 shrink-0 items-center justify-center">
        <svg viewBox="0 0 3 4" className="h-[3px]"><path d="M0 0v4l3-2z" /></svg>
      </button>
      <Toolbar
        label="Loads and views"
        items="filterRed v rotate load supportBlue table cube cubeBlue v member steps | member dims v _ stack zoomRed wire cubeYellow wire | viewX viewY viewX viewY v star v | cubeBlue v beam v mirror v cube v cube v spider orange eye"
      />
    </div>
    <div className="flex h-[11px] items-center overflow-hidden bg-[#fafafa] pl-[119px]">
      <Toolbar
        label="Modelling"
        items="v red v map v map filterGray v | arrowYellow nodeYellow nodeYellow nodeYellow green v map v filter | supportBlue frame sigma | wave beam cube up slash | steps steps steps grid steps slash map magenta | chart v | stack gear *eye ball ball | load polar mirror cross camera | stack stack cubeBlue"
      />
      <div className="flex h-2 w-[79px] shrink-0 items-center gap-px bg-[#e6e7f3]">
        <span className="size-1 rounded-full bg-[#2fa12f]" />
        <span className="size-1 rounded-full bg-[#e9c729]" />
        <span className="h-1 w-[5px] bg-[#444]" />
        <span className="mr-px size-1.5 bg-[#c3f9fb]" />
        <select aria-label="Layer" className="h-2 min-w-0 flex-1 appearance-none bg-transparent p-0"><option>1 - Default Base Layer</option></select>
        <FiChevronDown className="size-1.5 text-[#666]" />
      </div>
      <Toolbar label="Filter" items="filterRed v map" />
    </div>
  </header>
);

const App = () => {
  return (
    <div className="relative flex h-screen flex-col overflow-hidden bg-white font-['Lato','Open_Sans',sans-serif] text-[5px] leading-[7px] text-[#1a1a1a]">
      <AppBars />
      <main className="flex min-h-0 flex-1">
        <Navigator />
        <div className="relative flex min-w-0 flex-1 overflow-hidden bg-[#fdfdfd]">
          <Scene />
          <GeneratorDialog />
        </div>
      </main>
      <Banner />
      <Badges />
    </div>
  );
};

export default App;
